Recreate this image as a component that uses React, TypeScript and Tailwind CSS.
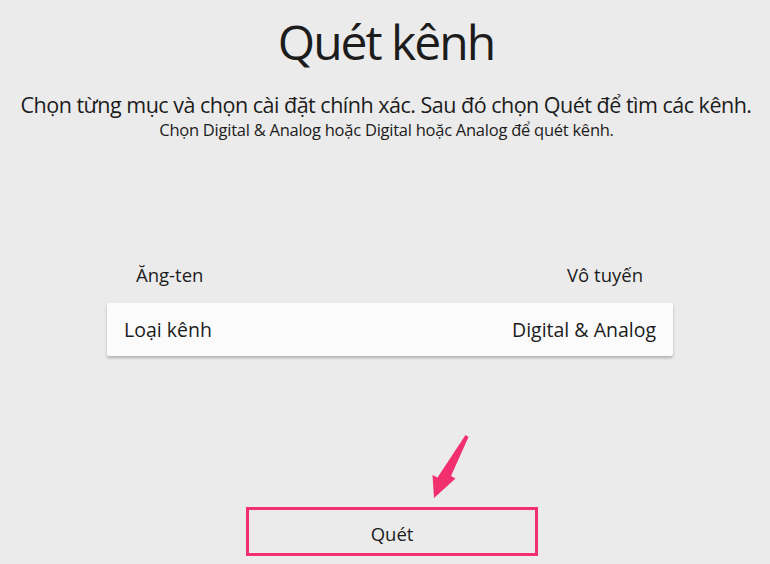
import React from 'react';

const font = { fontFamily: '"Open Sans", "Noto Sans", sans-serif' };

const App: React.FC = () => {
  return (
    <div
      className="relative w-[770px] h-[564px] overflow-hidden bg-[#ebebeb] text-[#1c1c1c] flex flex-col items-center"
      style={font}
    >
      <h1 className="mt-[10px] ml-[2px] h-[64px] leading-[64px] text-[48px] font-normal tracking-[-2px]">
        Quét kênh
      </h1>
      <p className="mt-[17px] ml-[2px] h-[28px] leading-[28px] text-[21.5px] tracking-[-0.5px]">
        Chọn từng mục và chọn cài đặt chính xác. Sau đó chọn Quét để tìm các kênh.
      </p>
      <p className="mt-[1px] ml-[3px] h-[20px] leading-[20px] text-[16.5px] tracking-[-0.25px]">
        Chọn Digital &amp; Analog hoặc Digital hoặc Analog để quét kênh.
      </p>

      <div className="mt-[122px] ml-[10px] w-[566px] flex flex-col">
        <div className="h-[26px] flex items-center justify-between pl-[29px] pr-[30px] text-[18.5px]">
          <span>Ăng-ten</span>
          <span>Vô tuyến</span>
        </div>
        <div className="mt-[15px] h-[53px] bg-[#fbfbfb] rounded-[2px] shadow-[0_2px_3px_rgba(0,0,0,0.25)] flex items-center justify-between pl-[17px] pr-[17px] text-[19.5px]">
          <span>Loại kênh</span>
          <span>Digital &amp; Analog</span>
        </div>
      </div>

      <div className="mt-[151px] ml-[14px] w-[292px] h-[49px] border-[3px] border-[#f2306f] flex items-center justify-center pt-[4px] text-[18.5px]">
        Quét
      </div>

      <svg className="absolute left-[420px] top-[430px]" width="60" height="75" viewBox="0 0 60 75">
        <path d="M45.5 5 L48.5 7 L31 46 L35.5 48.5 L14 68 L12.5 45 L17.5 47.5 Z" fill="#f2306f" />
      </svg>
    </div>
  );
};

export default App;
